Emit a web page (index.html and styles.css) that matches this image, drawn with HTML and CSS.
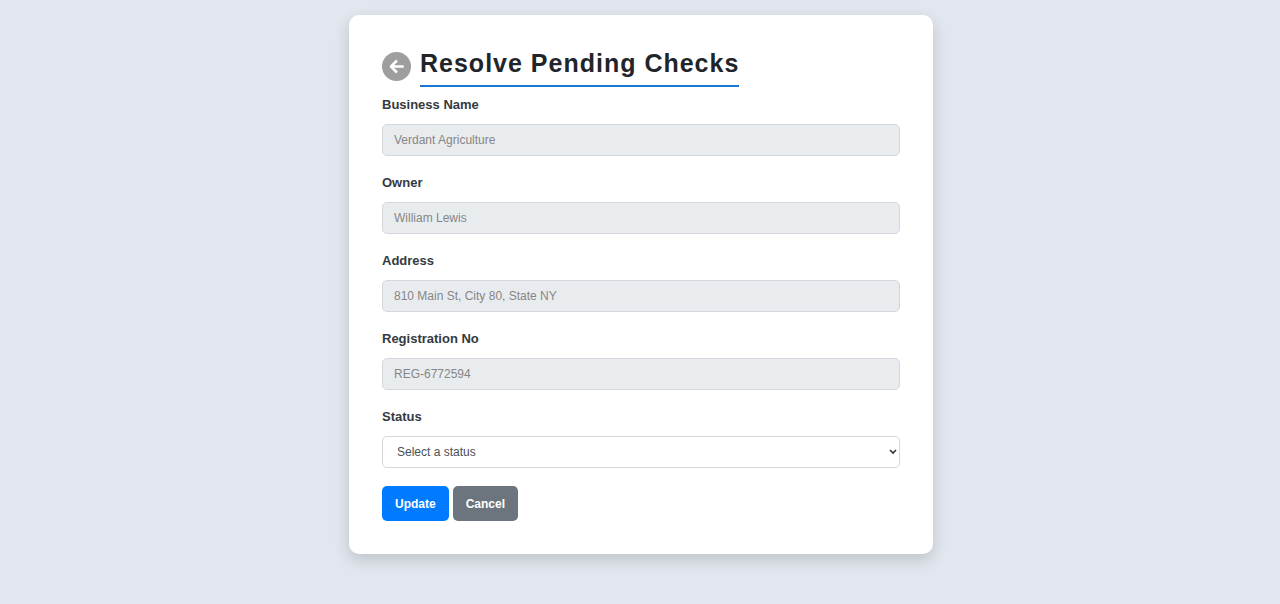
FILE: index.html
```html
<!DOCTYPE html>
<html lang="en">
<head>
<meta charset="utf-8">
<meta name="viewport" content="width=device-width, initial-scale=1">
<title>Resolve Pending Checks</title>
<link rel="stylesheet" href="styles.css">
</head>
<body>
<main class="card">
  <header class="heading">
    <a class="back" href="#" aria-label="Back">
      <svg viewBox="0 0 30 30" fill="none" aria-hidden="true">
        <circle cx="15" cy="15" r="15" fill="#9e9e9e"/>
        <path d="M22.500 15H9.500M15.500 8.800L9.300 15l6.200 6.200" stroke="#fff" stroke-width="2.600" stroke-linejoin="round"/>
      </svg>
    </a>
    <h1 class="title">Resolve Pending Checks</h1>
  </header>
  <form class="form">
    <div class="field">
      <label class="label" for="business">Business Name</label>
      <input class="control" id="business" type="text" value="Verdant Agriculture" disabled>
    </div>
    <div class="field">
      <label class="label" for="owner">Owner</label>
      <input class="control" id="owner" type="text" value="William Lewis" disabled>
    </div>
    <div class="field">
      <label class="label" for="address">Address</label>
      <input class="control" id="address" type="text" value="810 Main St, City 80, State NY" disabled>
    </div>
    <div class="field">
      <label class="label" for="registration">Registration No</label>
      <input class="control" id="registration" type="text" value="REG-6772594" disabled>
    </div>
    <div class="field">
      <label class="label" for="status">Status</label>
      <select class="control select" id="status">
        <option>Select a status</option>
      </select>
    </div>
    <div class="actions">
      <button class="button primary" type="submit">Update</button>
      <button class="button secondary" type="button">Cancel</button>
    </div>
  </form>
</main>
</body>
</html>
```
FILE: styles.css
```css
* {
  box-sizing: border-box;
}

body {
  margin: 0;
  padding: 15px 15px 50px 17px;
  background: #e2e7ef;
  color: #212529;
  font-family: "Liberation Sans", Arial, sans-serif;
}

.card {
  max-width: 584px;
  margin: 0 auto;
  padding: 33px;
  border-radius: 10px;
  background: #fff;
  box-shadow: 0 6px 16px rgba(0, 0, 0, 0.16);
}

.heading {
  display: flex;
  align-items: flex-start;
  gap: 9px;
}

.back {
  width: 29px;
  height: 29px;
  margin-top: 4px;
}

.back svg {
  display: block;
  width: 100%;
  height: 100%;
}

.title {
  margin: 0;
  padding-bottom: 7px;
  border-bottom: 2px solid #1976d2;
  font-size: 25px;
  line-height: 30px;
  letter-spacing: 1px;
}

.form {
  display: flex;
  flex-direction: column;
  gap: 18px;
  margin-top: 9px;
}

.field {
  display: flex;
  flex-direction: column;
  gap: 10px;
}

.label {
  color: #343a40;
  font-size: 13px;
  font-weight: bold;
  line-height: 18px;
}

.control {
  width: 100%;
  height: 32px;
  padding: 0 11px;
  border: 1px solid #d3d7db;
  border-radius: 5px;
  background: #e9ecef;
  color: #868686;
  font-family: inherit;
  font-size: 12px;
}

.select {
  appearance: none;
  padding: 0 14px;
  background: #fff url("data:image/svg+xml,%3Csvg xmlns='http://www.w3.org/2000/svg' width='8' height='6' fill='none'%3E%3Cpath d='M1 1l3 3 3-3' stroke='%23333' stroke-width='1.600'/%3E%3C/svg%3E") no-repeat right 2px center;
  color: #495057;
}

.actions {
  display: flex;
  gap: 4px;
}

.button {
  height: 35px;
  padding: 0 13px;
  border: 0;
  border-radius: 5px;
  color: #fff;
  font-family: inherit;
  font-size: 12px;
  font-weight: bold;
}

.primary {
  background: #007bff;
}

.secondary {
  background: #6c757d;
}
```
